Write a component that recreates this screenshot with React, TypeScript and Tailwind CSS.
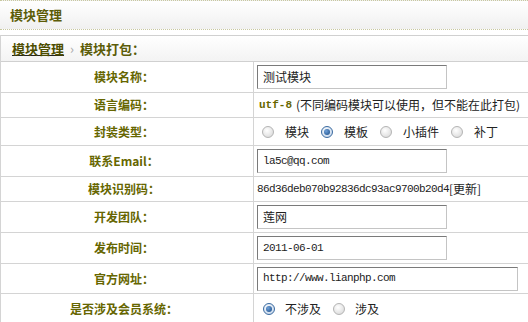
import type { ReactNode } from 'react'

const cjk = "font-['SimSun','Noto_Sans_CJK_SC',sans-serif]"
const mono = "font-['Liberation_Mono','Noto_Sans_CJK_SC',monospace]"

function Radio({ checked }: { checked?: boolean }) {
  if (checked) {
    return (
      <span className="block w-[12px] h-[12px] rounded-full border border-[#3a6aa0] bg-[radial-gradient(circle_at_40%_35%,#ffffff,#b8cde6)] flex items-center justify-center shrink-0">
        <span className="block w-[6px] h-[6px] rounded-full bg-[radial-gradient(circle_at_35%_35%,#6fa0d8,#174a86)]" />
      </span>
    )
  }
  return (
    <span className="block w-[12px] h-[12px] rounded-full border border-[#b4b4b4] bg-[radial-gradient(circle_at_40%_35%,#ffffff,#d4d4d4)] shrink-0" />
  )
}

function Field({ value, wide, cn }: { value: string; wide?: boolean; cn?: boolean }) {
  return (
    <div
      className={`${wide ? 'w-[261px]' : 'w-[190px]'} h-[24px] flex items-center px-[5px] border border-t-[#7a7a7a] border-l-[#7a7a7a] border-r-[#c4c4c4] border-b-[#c4c4c4] bg-white text-[#222] ${cn ? 'text-[12px]' : `text-[11px] tracking-[-0.6px] ${mono}`}`}
    >
      {value}
    </div>
  )
}

function Row({ h, label, children }: { h: string; label: string; children: ReactNode }) {
  return (
    <div className={`flex ${h} border-b border-[#d4d4d4]`}>
      <div className="w-[253px] shrink-0 border-r border-[#d4d4d4] flex items-center justify-center pr-[6px] font-bold text-[12px] text-[#666600]">
        {label}
      </div>
      <div className="flex-1 flex items-center pl-[3px]">{children}</div>
    </div>
  )
}

export default function App() {
  return (
    <div className={`w-[528px] h-[322px] overflow-hidden bg-white ${cjk}`}>
      <div className="h-[30px] border-t border-b border-dotted border-[#c8c8a0] bg-[linear-gradient(#ffffff,#f0f0f0)] flex items-center pl-[10px]">
        <span className="font-bold text-[13px] text-[#5c5c08]">模块管理</span>
      </div>
      <div className="mt-[5px] border-l border-[#d4d4d4]">
        <div className="h-[27px] border-t border-b border-[#d0d0d0] bg-[linear-gradient(#ffffff,#f3f3f3)] flex items-center pl-[11px] text-[13px] font-bold">
          <span className="text-[#4d4d00] underline decoration-[#222]">模块管理</span>
          <span className="text-[#a8a8a8] font-normal mx-[6px]">›</span>
          <span className="text-[#5c5c08]">模块打包：</span>
        </div>
        <Row h="h-[31px]" label="模块名称：">
          <Field value="测试模块" cn />
        </Row>
        <Row h="h-[25px]" label="语言编码：">
          <span className={`${mono} font-bold text-[11px] text-[#666600] pl-[2px]`}>utf-8</span>
          <span className="text-[12px] text-[#222] ml-[4px]">(不同编码模块可以使用，但不能在此打包)</span>
        </Row>
        <Row h="h-[28px]" label="封装类型：">
          <div className="flex items-center text-[12px] text-[#222] pl-[5px]">
            <Radio />
            <span className="ml-[11px] mr-[12px]">模块</span>
            <Radio checked />
            <span className="ml-[11px] mr-[12px]">模板</span>
            <Radio />
            <span className="ml-[11px] mr-[12px]">小插件</span>
            <Radio />
            <span className="ml-[11px]">补丁</span>
          </div>
        </Row>
        <Row h="h-[31px]" label="联系Email：">
          <Field value="la5c@qq.com" />
        </Row>
        <Row h="h-[25px]" label="模块识别码：">
          <span className={`${mono} text-[11px] tracking-[-0.6px] text-[#222]`}>86d36deb070b92836dc93ac9700b20d4</span>
          <span className="text-[12px] text-[#222]">[更新]</span>
        </Row>
        <Row h="h-[31px]" label="开发团队：">
          <Field value="莲网" cn />
        </Row>
        <Row h="h-[31px]" label="发布时间：">
          <Field value="2011-06-01" />
        </Row>
        <Row h="h-[30px]" label="官方网址：">
          <Field value="http://www.lianphp.com" wide />
        </Row>
        <Row h="h-[30px]" label="是否涉及会员系统：">
          <div className="flex items-center text-[12px] text-[#222] pl-[6px]">
            <Radio checked />
            <span className="ml-[10px] mr-[12px]">不涉及</span>
            <Radio />
            <span className="ml-[10px]">涉及</span>
          </div>
        </Row>
      </div>
    </div>
  )
}
